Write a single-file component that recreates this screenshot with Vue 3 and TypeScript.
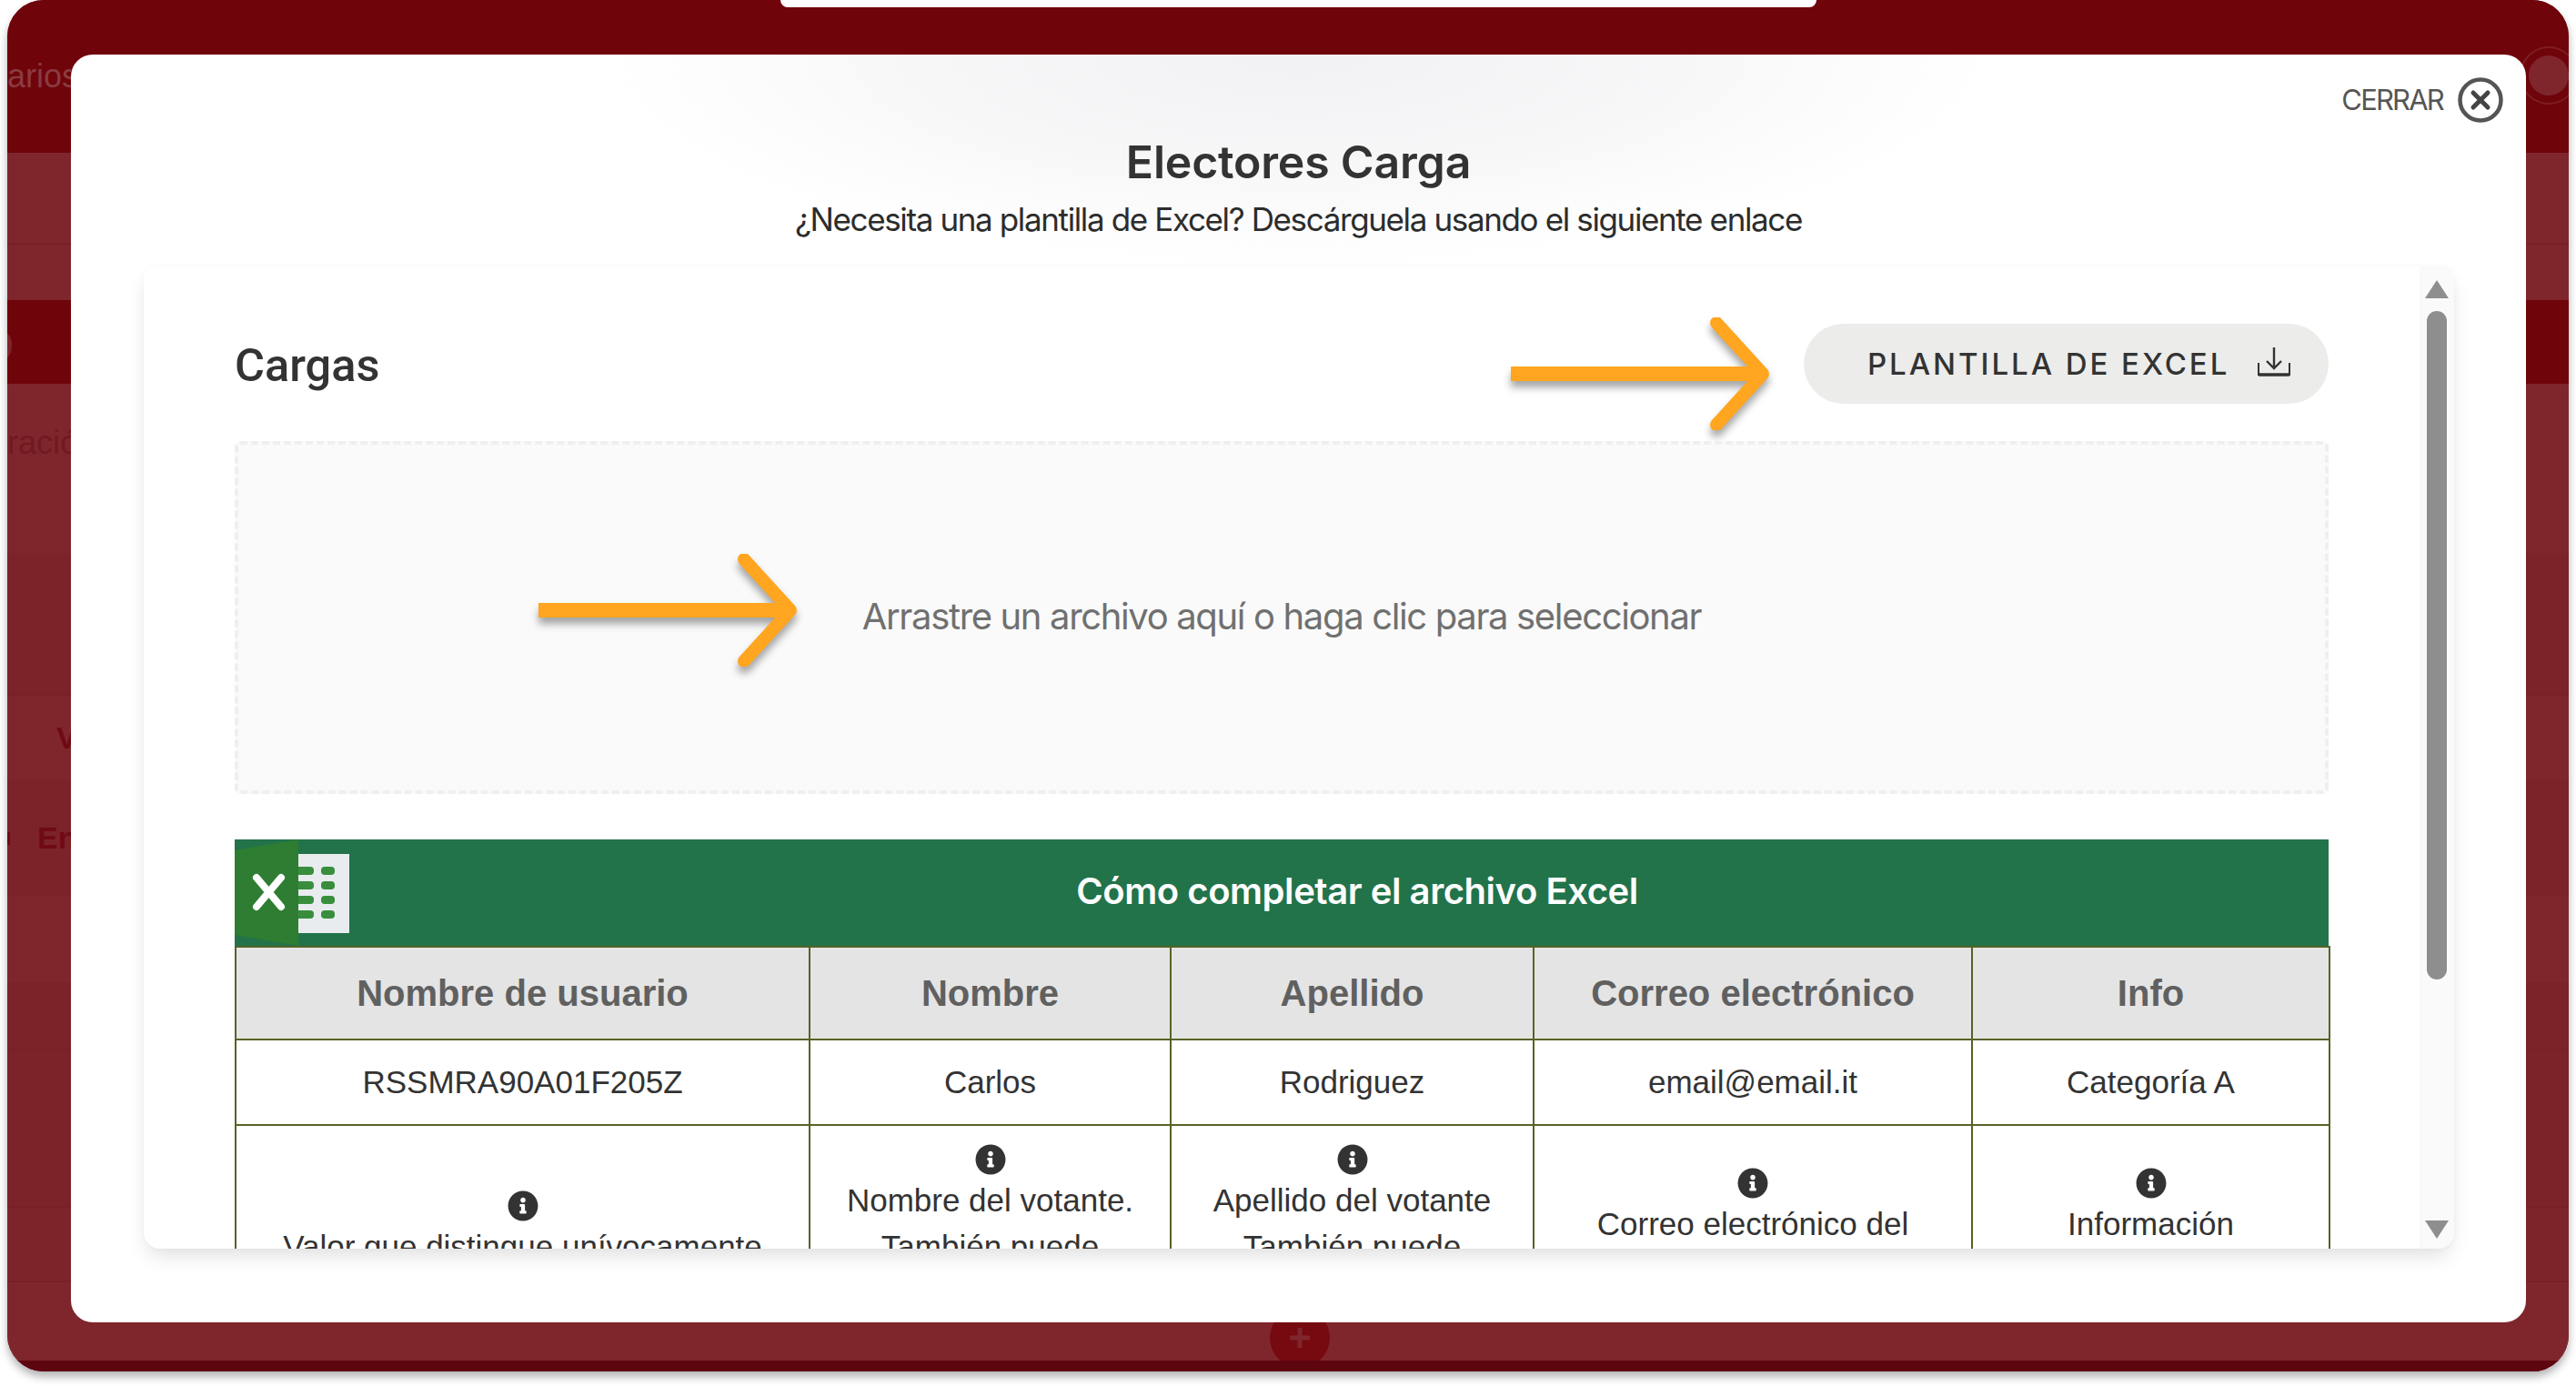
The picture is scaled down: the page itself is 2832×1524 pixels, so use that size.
<script setup lang="ts">
interface BackRow {
  height: number
  dark?: boolean
  line?: boolean
  shade?: string
  label?: string
  labelKind?: string
  offset?: number
}

// rows of the app that stays visible around the modal
const backRows: BackRow[] = [
  { height: 101, line: true },
  { height: 61 },
  { height: 92, dark: true },
  { height: 186, label: 'Administración', labelKind: 'muted', offset: -138 },
  { height: 157, shade: '#7c2229', line: true },
  { height: 92, shade: '#7f262d', label: 'Votantes', labelKind: 'strong', offset: 54 },
  { height: 129, shade: '#7c2229', label: 'Envíos', labelKind: 'strong', offset: 33 },
  { height: 94, shade: '#7f262d' },
  { height: 75, shade: '#7c2229', line: true },
  { height: 173, shade: '#7c2229', line: true },
  { height: 82, shade: '#7d242b', line: true },
]

const columns = [631, 397, 399, 482, 393]
const headers = ['Nombre de usuario', 'Nombre', 'Apellido', 'Correo electrónico', 'Info']
const sample = ['RSSMRA90A01F205Z', 'Carlos', 'Rodriguez', 'email@email.it', 'Categoría A']
const notes = [
  ['Valor que distingue unívocamente', 'a cada votante.'],
  ['Nombre del votante.', 'También puede', 'incluir el segundo', 'nombre.'],
  ['Apellido del votante', 'También puede', 'incluir el segundo', 'apellido.'],
  ['Correo electrónico del', 'votante para', 'recibir avisos.'],
  ['Información', 'adicional', 'del votante.'],
]
const sheetRows = [30, 46, 62, 78]
</script>

<template>
  <div class="screen">
    <div class="frame">
      <div class="top-tab"></div>
      <div class="back-top">
        <div class="back-side-label"><span>Usuarios</span></div>
      </div>
      <div
        v-for="(row, i) in backRows"
        :key="i"
        class="back-row"
        :class="{ dark: row.dark, line: row.line }"
        :style="{ height: row.height + 'px', background: row.dark ? undefined : row.shade }"
      >
        <span
          v-if="row.label"
          class="back-label"
          :class="row.labelKind"
          :style="{ marginLeft: (row.offset ?? 0) + 'px' }"
        >{{ row.label }}</span>
      </div>
      <div class="back-bottom"></div>
      <div class="back-avatar"></div>
      <div class="back-dot"></div>
      <div class="back-tick"></div>
      <div class="back-add">
        <svg viewBox="0 0 24 24" width="24" height="24">
          <path d="M12 1v22M1 12h22" stroke="#7f262d" stroke-width="5" fill="none" />
        </svg>
      </div>

      <div class="modal">
        <button class="close" type="button">
          <span>CERRAR</span>
          <svg viewBox="0 0 50 50" width="50" height="50">
            <circle cx="25" cy="25" r="22.5" fill="none" stroke="#555" stroke-width="4.5" />
            <path d="M17 17l16 16M33 17L17 33" stroke="#444" stroke-width="5" stroke-linecap="round" />
          </svg>
        </button>

        <header class="modal-head">
          <h1>Electores Carga</h1>
          <p>¿Necesita una plantilla de Excel? Descárguela usando el siguiente enlace</p>
        </header>

        <section class="card">
          <div class="card-body">
            <div class="load-head">
              <h2>Cargas</h2>
              <svg class="arrow arrow-btn" viewBox="0 0 290 124" width="290" height="124">
                <path d="M0 62h270" stroke="#ffa51f" stroke-width="16" fill="none" />
                <path d="M226 6l51 56-51 56" stroke="#ffa51f" stroke-width="14" stroke-linecap="round" stroke-linejoin="round" fill="none" />
              </svg>
              <button class="template-btn" type="button">
                <span>PLANTILLA DE EXCEL</span>
                <svg viewBox="0 0 36 32" width="36" height="32">
                  <path d="M18 0v23M10 15l8 8 8-8" stroke="#333" stroke-width="2.4" fill="none" />
                  <path d="M1 17v13h34V17" stroke="#333" stroke-width="2" fill="none" />
                  <path d="M1 30h34" stroke="#333" stroke-width="3.4" />
                </svg>
              </button>
            </div>

            <div class="dropzone">
              <svg class="arrow arrow-drop" viewBox="0 0 290 124" width="290" height="124">
                <path d="M0 62h270" stroke="#ffa51f" stroke-width="16" fill="none" />
                <path d="M226 6l51 56-51 56" stroke="#ffa51f" stroke-width="14" stroke-linecap="round" stroke-linejoin="round" fill="none" />
              </svg>
              <span>Arrastre un archivo aquí o haga clic para seleccionar</span>
            </div>

            <div class="sheet-title">
              <svg class="excel" viewBox="0 0 126 117" width="126" height="117">
                <path d="M70 16h56v87H70z" fill="#e8ecef" />
                <g v-for="y in sheetRows" :key="y" fill="#388e3c">
                  <rect x="66" :y="y" width="21" height="9" rx="4" />
                  <rect x="95" :y="y" width="15" height="9" rx="4" />
                </g>
                <path d="M0 12L70 0v117L0 105z" fill="#2e7d32" />
                <path d="M24 42l27 32M51 42L24 74" stroke="#fff" stroke-width="8" stroke-linecap="round" fill="none" />
              </svg>
              <h3>Cómo completar el archivo Excel</h3>
            </div>
            <table class="guide">
              <colgroup>
                <col v-for="(w, i) in columns" :key="i" :style="{ width: w + 'px' }" />
              </colgroup>
              <thead>
                <tr>
                  <th v-for="h in headers" :key="h">{{ h }}</th>
                </tr>
              </thead>
              <tbody>
                <tr class="sample">
                  <td v-for="s in sample" :key="s">{{ s }}</td>
                </tr>
                <tr class="notes">
                  <td v-for="(lines, i) in notes" :key="i">
                    <svg class="info" viewBox="0 0 512 512" width="34" height="34">
                      <path fill="#333" d="M256 8C119 8 8 119.1 8 256c0 137 111 248 248 248s248-111 248-248C504 119.1 393 8 256 8zm0 110c23.2 0 42 18.8 42 42s-18.8 42-42 42-42-18.8-42-42 18.8-42 42-42zm56 254c0 6.6-5.4 12-12 12h-88c-6.6 0-12-5.4-12-12v-24c0-6.6 5.4-12 12-12h12v-64h-12c-6.6 0-12-5.4-12-12v-24c0-6.6 5.4-12 12-12h64c6.6 0 12 5.4 12 12v100h12c6.6 0 12 5.4 12 12v24z" />
                    </svg>
                    <div v-for="l in lines" :key="l" class="note-line">{{ l }}</div>
                  </td>
                </tr>
              </tbody>
            </table>
          </div>
          <div class="scrollbar">
            <span class="tri up"></span>
            <div class="thumb-track"><div class="thumb"></div></div>
            <span class="tri down"></span>
          </div>
        </section>
      </div>
    </div>
  </div>
</template>

<style>
html,
body {
  margin: 0;
  background: #fff;
  overflow: hidden;
}
</style>

<style scoped>
.screen {
  width: 2832px;
  height: 1524px;
  box-sizing: border-box;
  padding: 0 8px 16px;
  font-family: Inter, "Liberation Sans", sans-serif;
}

.frame {
  position: relative;
  height: 100%;
  display: flex;
  flex-direction: column;
  overflow: hidden;
  border-radius: 40px;
  background: #7f262d;
  box-shadow: 0 6px 10px rgba(0, 0, 0, 0.3);
}

.top-tab {
  position: absolute;
  left: 850px;
  top: 0;
  width: 1139px;
  height: 8px;
  background: #fff;
  border-radius: 0 0 12px 12px;
}

.back-top {
  height: 168px;
  flex: none;
  background: #6f040b;
}

.back-side-label {
  display: flex;
  justify-content: flex-end;
  width: 70px;
  padding-top: 57px;
  overflow: hidden;
  font: 36px/54px "Liberation Sans", sans-serif;
  color: #8a3b40;
}

.back-side-label span {
  margin-right: -8px;
}

.back-row {
  flex: none;
  box-sizing: border-box;
  background: #7f262d;
  display: flex;
  align-items: center;
  overflow: hidden;
  white-space: nowrap;
  font-family: "Liberation Sans", sans-serif;
}

.back-row.dark {
  background: #6f040b;
}

.back-row.line {
  border-bottom: 2px solid #7a1f26;
}

.back-label {
  font-size: 36px;
  flex: none;
}

.back-label.muted {
  color: #6f1a20;
  margin-top: -56px;
}

.back-label.strong {
  color: #6f0a12;
  font-weight: 700;
  font-size: 34px;
}

.back-bottom {
  flex: 1;
  background: #7f262d;
  position: relative;
}

.back-bottom::after {
  content: "";
  position: absolute;
  left: 0;
  right: 0;
  bottom: 0;
  height: 12px;
  background: #5e0610;
  z-index: 1;
}

.back-avatar {
  position: absolute;
  left: 2772px;
  top: 61px;
  width: 44px;
  height: 44px;
  border-radius: 50%;
  background: #7f262d;
  box-shadow: 0 0 0 8px #6f040b, 0 0 0 10px #7f1d24;
}

.back-dot {
  position: absolute;
  left: -10px;
  top: 366px;
  width: 15px;
  height: 28px;
  border-radius: 50%;
  background: #7f262d;
}

.back-tick {
  position: absolute;
  left: 0;
  top: 915px;
  width: 3px;
  height: 14px;
  background: #6f0a12;
}

.back-add {
  position: absolute;
  left: 1388px;
  top: 1438px;
  width: 66px;
  height: 66px;
  border-radius: 50%;
  background: #760a10;
  display: flex;
  align-items: center;
  justify-content: center;
}

.back-add svg {
  display: block;
}

.modal {
  position: absolute;
  left: 70px;
  top: 60px;
  width: 2699px;
  height: 1394px;
  z-index: 2;
  border-radius: 24px;
  background:
    radial-gradient(ellipse 760px 230px at 1350px 0, #f1f1f3 0%, rgba(244, 244, 246, 0.7) 55%, rgba(255, 255, 255, 0) 100%),
    #fff;
  display: flex;
  flex-direction: column;
}

.close {
  position: absolute;
  right: 25px;
  top: 25px;
  display: flex;
  align-items: center;
  gap: 16px;
  padding: 0;
  border: 0;
  background: none;
  color: #555;
  font: 400 31px/50px Inter, sans-serif;
  letter-spacing: -1.8px;
}

.close svg {
  display: block;
}

.modal-head {
  height: 233px;
  flex: none;
  box-sizing: border-box;
  padding-top: 88px;
  text-align: center;
  color: #333;
}

.modal-head h1 {
  margin: 0;
  font-size: 50px;
  font-weight: 600;
  line-height: 60px;
  letter-spacing: -0.2px;
}

.modal-head p {
  margin: 8px 0 0;
  font-size: 35px;
  line-height: 50px;
  letter-spacing: -1.37px;
  color: #2c2c2c;
}

.card {
  flex: none;
  width: 2540px;
  height: 1080px;
  margin-left: 80px;
  display: flex;
  overflow: hidden;
  background: #fff;
  border-radius: 14px 14px 18px 18px;
  box-shadow: 0 12px 22px -4px rgba(0, 0, 0, 0.12), 0 0 6px rgba(0, 0, 0, 0.03);
}

.card-body {
  flex: 1;
  min-width: 0;
  box-sizing: border-box;
  padding: 63px 100px 0;
  overflow: hidden;
}

.load-head {
  position: relative;
  display: flex;
  align-items: center;
  justify-content: space-between;
  height: 88px;
  margin-bottom: 41px;
}

.load-head h2 {
  margin: 0;
  padding-top: 3px;
  font: 500 50.5px/60px Roboto, sans-serif;
  color: #333;
}

.arrow {
  position: absolute;
  filter: drop-shadow(0 7px 4px rgba(0, 0, 0, 0.35));
}

.arrow-btn {
  left: 1403px;
  top: -7px;
}

.arrow-drop {
  left: 330px;
  top: 120px;
}

.template-btn {
  display: flex;
  align-items: center;
  gap: 31px;
  height: 88px;
  width: 577px;
  padding: 0 36px 0 70px;
  box-sizing: border-box;
  border: 0;
  border-radius: 44px;
  background: #ecedea;
  color: #333;
  font: 500 33px/1 Inter, sans-serif;
  letter-spacing: 2.95px;
  white-space: nowrap;
}

.template-btn svg {
  display: block;
  flex: none;
  margin-top: -4px;
}

.dropzone {
  position: relative;
  box-sizing: border-box;
  height: 388px;
  display: flex;
  align-items: center;
  justify-content: center;
  padding-bottom: 3px;
  border: 4px dashed #efefef;
  border-radius: 6px;
  background: #fafafa;
  color: #707070;
  font-size: 40px;
  letter-spacing: -1.35px;
  margin-bottom: 50px;
}

.sheet-title {
  display: flex;
  height: 117px;
  background: #22734a;
  color: #fff;
}

.excel {
  display: block;
  flex: none;
}

.sheet-title h3 {
  flex: 1;
  margin: 0;
  padding-left: 40px;
  text-align: center;
  font-size: 40px;
  font-weight: 600;
  line-height: 114px;
  letter-spacing: -0.45px;
}

.guide {
  width: 2302px;
  table-layout: fixed;
  border-collapse: collapse;
  font-family: "Liberation Sans", sans-serif;
  text-align: center;
}

.guide th,
.guide td {
  padding: 0;
  border: 2px solid #566326;
}

.guide th {
  height: 100px;
  background: #e4e4e4;
  color: #606060;
  font-size: 40px;
  font-weight: 700;
}

.guide td {
  font-size: 35px;
  color: #333;
}

.sample td {
  height: 92px;
}

.notes td {
  padding: 20px 10px;
  vertical-align: middle;
}

.info {
  display: block;
  margin: 0 auto 2px;
}

.note-line {
  line-height: 51px;
  white-space: nowrap;
}

.scrollbar {
  flex: none;
  width: 38px;
  display: flex;
  flex-direction: column;
  align-items: center;
  padding: 15px 0 11px;
  box-sizing: border-box;
  background: #fafafa;
}

.tri {
  width: 0;
  height: 0;
  flex: none;
  border-left: 13px solid transparent;
  border-right: 13px solid transparent;
}

.tri.up {
  border-bottom: 20px solid #8e8e8e;
}

.tri.down {
  border-top: 20px solid #8e8e8e;
}

.thumb-track {
  flex: 1;
  width: 22px;
  padding-top: 14px;
}

.thumb {
  height: 735px;
  border-radius: 11px;
  background: #8e8e8e;
}
</style>
